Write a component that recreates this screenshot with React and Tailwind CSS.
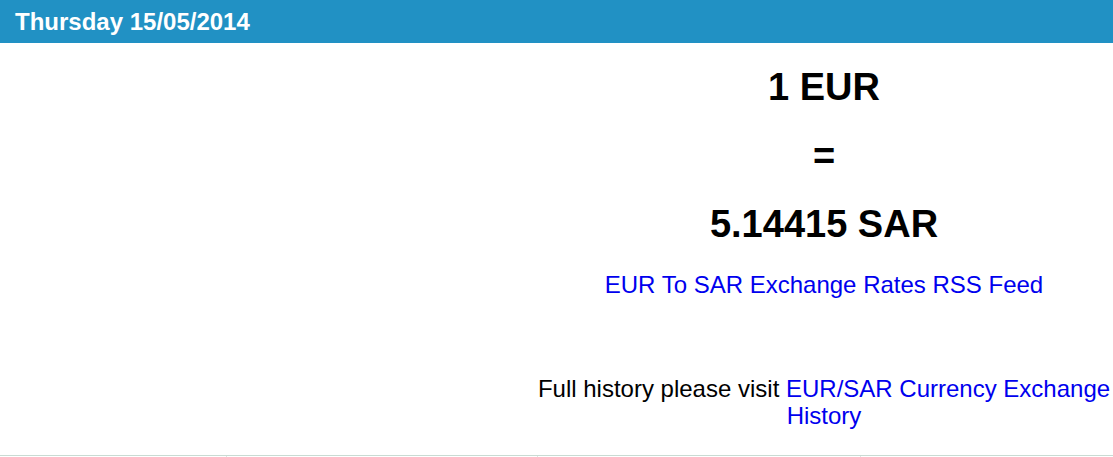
import React from 'react';

export default function App() {
  return (
    <div className="min-h-screen bg-white font-['Liberation_Sans',Arial,sans-serif]">
      {/* Date bar */}
      <div className="h-[43px] bg-[#2191c4] pl-[15px] text-[24px] font-bold leading-[43px] text-white">
        Thursday 15/05/2014
      </div>

      <div className="flex">
        <div className="w-[535px] shrink-0"></div>
        <div className="flex-1 text-center text-black">
          <h1 className="mt-[22px] text-[38px] font-bold leading-[44px]">1 EUR</h1>
          <h1 className="mt-[25px] text-[38px] font-bold leading-[44px]">=</h1>
          <h1 className="mt-[24px] text-[38px] font-bold leading-[44px]">5.14415 SAR</h1>
          <p className="mt-[25px] text-[24px] leading-[27.6px]">
            <a href="#" className="text-[#0000ee]">EUR To SAR Exchange Rates RSS Feed</a>
          </p>
          <p className="mt-[76px] text-[24px] leading-[27.6px]">
            Full history please visit{' '}
            <a href="#" className="text-[#0000ee]">EUR/SAR Currency Exchange History</a>
          </p>
        </div>
      </div>

      {/* Next table row, cut off by the window */}
      <div className="mt-[25px] flex h-[30px] border-t border-[#c9dbd3]">
        <div className="w-[226px]"></div>
        <div className="w-[311px] border-l border-[#dde6e2]"></div>
        <div className="w-[323px] border-l border-[#dde6e2]"></div>
        <div className="flex-1 border-l border-[#dde6e2]"></div>
      </div>
    </div>
  );
}
